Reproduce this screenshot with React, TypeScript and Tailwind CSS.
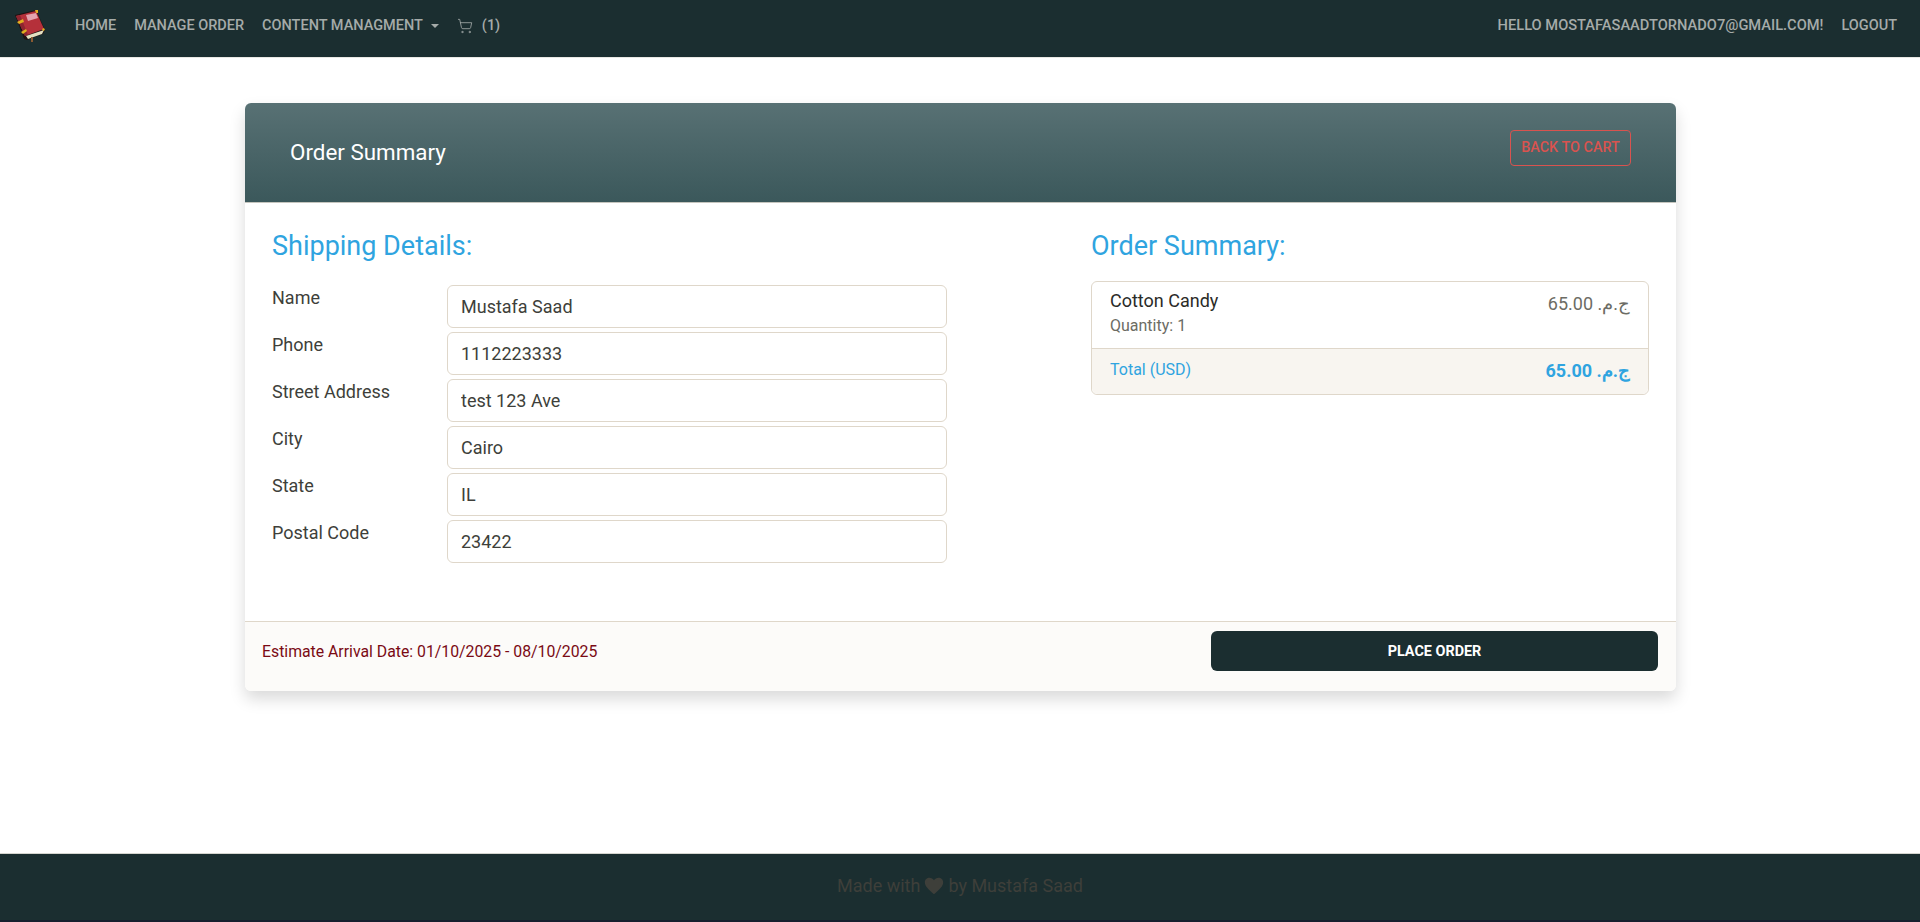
import { ShoppingCart } from "lucide-react";

const fields = [
  { label: "Name", value: "Mustafa Saad" },
  { label: "Phone", value: "1112223333" },
  { label: "Street Address", value: "test 123 Ave" },
  { label: "City", value: "Cairo" },
  { label: "State", value: "IL" },
  { label: "Postal Code", value: "23422" },
];

function BookLogo() {
  return (
    <svg viewBox="0 0 32 34" className="h-[34px] w-[32px]">
      <path d="M1 6 L22 1 L31 21 L29 25 L13 31 L10 30 Z" fill="#1f1212" />
      <path d="M2 7 L22 2 L30 20 L11 27 Z" fill="#b5303a" />
      <path d="M2 7 L6 6 L14 26 L11 27 Z" fill="#8e2530" />
      <path d="M12 27 L30 21 L28 25 L14 30 Z" fill="#e4e0c2" />
      <path d="M12 6 L22 4 L24 9 L14 12 Z" fill="#e3a3ad" />
      <path d="M3 13 L9 10 L10 13 L5 15 Z" fill="#e0b020" />
      <path d="M7 23 L12 20 L13 22 L9 25 Z" fill="#e0b020" />
      <path d="M21 1 L24 1 L24 4 L22 4 Z" fill="#e0b020" />
      <path d="M29 19 L31 20 L30 22 L28 21 Z" fill="#e0b020" />
      <path d="M17 28 L19 28 L19 33 L17 33 Z" fill="#8a5a32" />
    </svg>
  );
}

export default function App() {
  return (
    <div className="flex min-h-[922px] flex-col bg-white font-['Roboto',sans-serif] text-[#3e3f3a]">
      <nav className="flex h-[58px] items-center justify-between border-b border-[#e8e8e4] bg-[#1b2e30] pr-[23px] pb-[6px] pl-[14px] text-[14.5px] font-medium text-[#a5aba9] uppercase">
        <div className="flex items-center">
          <BookLogo />
          <div className="ml-[29px] flex items-center gap-[18px]">
            <a>Home</a>
            <a>Manage Order</a>
            <a className="flex items-center">
              Content Managment
              <span className="ml-[8px] h-0 w-0 border-x-[4px] border-t-[4px] border-x-transparent border-t-[#a5aba9]" />
            </a>
            <a className="flex items-center normal-case">
              <ShoppingCart size={16} strokeWidth={1.25} />
              <span className="ml-[9px]">(1)</span>
            </a>
          </div>
        </div>
        <div className="flex items-center gap-[18px]">
          <a className="text-[14.65px]">Hello mostafasaadtornado7@gmail.com!</a>
          <a>Logout</a>
        </div>
      </nav>

      <main className="flex-1 pt-[45px] pr-[244px] pl-[245px]">
        <div className="rounded-[6px] bg-white shadow-[0_8px_16px_rgba(0,0,0,0.15)]">
          <div className="flex h-[100px] items-center justify-between rounded-t-[6px] border-b border-[#c5c5be] bg-gradient-to-b from-[#587174] to-[#3b585b] px-[45px]">
            <h2 className="text-[22.4px] font-normal text-white">Order Summary</h2>
            <button className="mb-[10px] h-[36px] w-[121px] rounded-[4px] border border-[#d9534f] pt-[1px] text-[14.4px] font-medium text-[#d9534f] uppercase">
              Back to cart
            </button>
          </div>

          <div className="flex h-[418px] gap-[144px] px-[27px] pt-[27px]">
            <div className="w-[675px]">
              <h3 className="text-[27px] leading-[32px] text-[#2fa4e0]">Shipping Details:</h3>
              <div className="mt-[23px] flex flex-col gap-[4px]">
                {fields.map((field) => (
                  <div className="flex" key={field.label}>
                    <label className="w-[175px] pt-[1px] text-[18px] leading-[24px]">{field.label}</label>
                    <input
                      readOnly
                      value={field.value}
                      className="h-[43px] w-[500px] rounded-[6px] border border-[#dfd7ca] px-[13px] text-[18px] text-[#3e3f3a] outline-none"
                    />
                  </div>
                ))}
              </div>
            </div>

            <div className="w-[558px]">
              <h3 className="text-[27px] leading-[32px] text-[#2fa4e0]">Order Summary:</h3>
              <div className="mt-[19px] rounded-[6px] border border-[#dfd7ca]">
                <div className="flex h-[67px] justify-between border-b border-[#dfd7ca] px-[18px] pt-[8px]">
                  <div>
                    <div className="text-[18px] leading-[22px] text-[#2b2b28]">Cotton Candy</div>
                    <div className="mt-[4px] text-[16px] leading-[20px] text-[#6c6c64]">Quantity: 1</div>
                  </div>
                  <span className="text-[18px] text-[#6c6c64]">65.00 ج.م.{"\u200f"}</span>
                </div>
                <div className="flex h-[45px] justify-between rounded-b-[6px] bg-[#f8f5f0] px-[18px] pt-[7px] text-[#2fa4e0]">
                  <span className="pt-[2px] text-[16px] leading-[24px]">Total (USD)</span>
                  <strong className="pt-[1px] text-[18px] leading-[28px] font-bold">65.00 ج.م.{"\u200f"}</strong>
                </div>
              </div>
            </div>
          </div>

          <div className="flex h-[70px] items-start justify-between rounded-b-[6px] border-t border-[#dfd7ca] bg-[#fcfbf9] pt-[9px] pr-[18px] pl-[17px]">
            <span className="mt-[10px] text-[15.8px] leading-[22px] text-[#7a0a14]">Estimate Arrival Date: 01/10/2025 - 08/10/2025</span>
            <button className="h-[40px] w-[447px] rounded-[6px] bg-[#1b2e30] pt-[1px] text-[14.4px] font-bold text-white uppercase">
              Place Order
            </button>
          </div>
        </div>
      </main>

      <footer className="flex h-[69px] items-center justify-center border-t border-b-[2px] border-t-[#d5d5cf] border-b-[#171f2e] bg-[#1b2e30] pb-[3px] text-[18px] text-[#3e3f3a]">
        <span>Made with</span>
        <svg viewBox="0 0 24 24" className="mx-[4px] h-[20px] w-[20px] fill-current">
          <path d="M12 22 C5 16 1 12 1 7.5 C1 4 3.7 2 6.5 2 C8.8 2 10.8 3.2 12 5.2 C13.2 3.2 15.2 2 17.5 2 C20.3 2 23 4 23 7.5 C23 12 19 16 12 22 Z" />
        </svg>
        <span>by Mustafa Saad</span>
      </footer>
    </div>
  );
}
